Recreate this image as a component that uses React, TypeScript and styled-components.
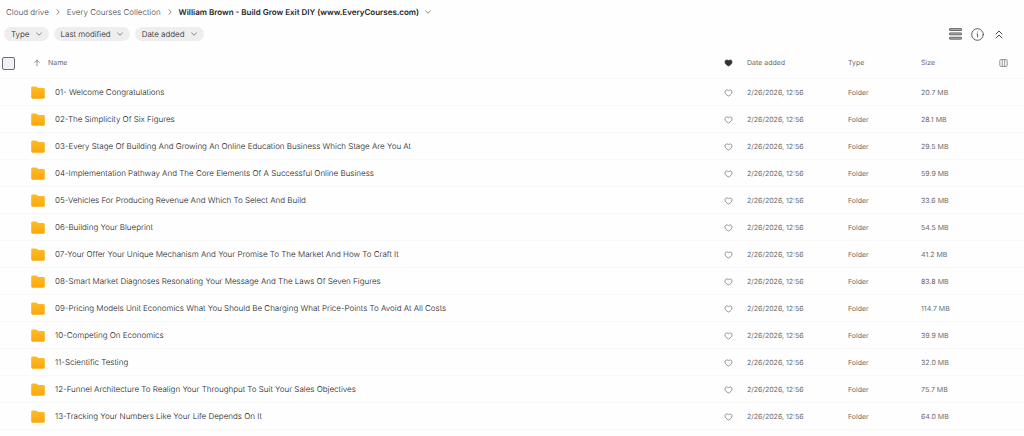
import React from "react";
import styled, { createGlobalStyle } from "styled-components";

const GlobalStyle = createGlobalStyle`
  * { box-sizing: border-box; }
  body {
    margin: 0;
    background: #fefefe;
    color: #161618;
    font-family: Inter, "Liberation Sans", sans-serif;
    font-size: 8px;
    font-weight: 300;
    line-height: 12px;
    text-rendering: geometricPrecision;
  }
  button { font: inherit; color: inherit; background: none; border: 0; padding: 0; cursor: pointer; text-rendering: inherit; }
  svg { display: block; flex: none; }
`;

const Page = styled.main`
  padding-bottom: 6px;
`;

const Breadcrumb = styled.nav`
  display: flex;
  align-items: center;
  gap: 6px;
  height: 24px;
  padding-left: 6px;
`;

const CrumbLink = styled.a`
  color: #444446;
  text-decoration: none;
`;

const CurrentCrumb = styled.button`
  display: flex;
  align-items: center;
  gap: 6px;
  color: #242627;
  font-weight: 600;
`;

const Toolbar = styled.div`
  display: flex;
  align-items: center;
  justify-content: space-between;
  height: 20px;
  padding: 0 19px 0 4px;
`;

const Filters = styled.div`
  display: flex;
  gap: 5px;
`;

const Chip = styled.button`
  display: flex;
  align-items: center;
  gap: 6px;
  height: 14px;
  padding: 0 7px;
  border-radius: 7px;
  background: #eeeeee;
`;

const Actions = styled.div`
  display: flex;
  align-items: center;
  gap: 9px;
`;

const IconButton = styled.button`
  display: flex;
  align-items: center;
  justify-content: center;
`;

const Table = styled.table`
  width: 100%;
  table-layout: fixed;
  border-collapse: separate;
  border-spacing: 0;
  margin-top: 3px;
`;

const Col = styled.col<{ $width?: number }>`
  width: ${(p) => (p.$width ? `${p.$width}px` : "auto")};
`;

const HeadCell = styled.th`
  height: 32px;
  padding: 1px 0 0;
  border-bottom: 1px solid #f8f8f8;
  color: #6a6a6c;
  font-size: 7px;
  font-weight: 400;
  text-align: left;
  vertical-align: middle;
`;

const SortButton = styled.button`
  display: flex;
  align-items: center;
  gap: 7px;
  padding-left: 4px;
`;

const Cell = styled.td`
  height: 27px;
  padding: 1px 0 0;
  border-bottom: 1px solid #f8f8f8;
  color: #6a6a6c;
  font-size: 7px;
  font-weight: 400;
  white-space: nowrap;
`;

const NameCell = styled(Cell)`
  padding: 0;
  color: #161618;
  font-size: 8px;
  font-weight: 300;
`;

const Checkbox = styled.input`
  appearance: none;
  display: block;
  width: 13px;
  height: 13px;
  margin: 0 0 0 2px;
  border: 1px solid #6b6b75;
  border-radius: 2px;
  background: #f0f0f6;
  &:checked { background: #6b6b75; }
`;

const FileName = styled.div`
  display: flex;
  align-items: center;
  gap: 10px;
  padding-left: 2px;
`;

type Chevron = { dir?: "down" | "right" };
const ChevronIcon = ({ dir = "down" }: Chevron) => (
  <svg width="6" height="6" viewBox="0 0 6 6" fill="none" stroke="#6a6a6c" strokeWidth="0.8" strokeLinecap="round" strokeLinejoin="round" aria-hidden="true">
    <path d={dir === "down" ? "M0.7 2 3 4.2 5.3 2" : "M2 0.7 4.2 3 2 5.3"} />
  </svg>
);

const FolderIcon = () => (
  <svg width="14" height="13" viewBox="0 0 14 13" aria-hidden="true">
    <defs>
      <linearGradient id="folder" x1="0" y1="0" x2="0" y2="1">
        <stop offset="0" stopColor="#fdbd28" />
        <stop offset="1" stopColor="#fba70c" />
      </linearGradient>
    </defs>
    <path d="M0.2 1.9C0.2 1 0.8 0.5 1.6 0.5H5c.6 0 1 .2 1.3.6l.5.6c.2.3.5.4.9.4h4.7c.8 0 1.4.6 1.4 1.4v7.8c0 .8-.6 1.4-1.4 1.4H1.6c-.8 0-1.4-.6-1.4-1.4z" fill="url(#folder)" />
  </svg>
);

const HeartIcon = ({ filled = false }: { filled?: boolean }) => (
  <svg width="9" height="8" viewBox="0 0 9 8" fill={filled ? "#303233" : "none"} stroke={filled ? "#303233" : "#6a6a6c"} strokeWidth="0.7" strokeLinejoin="round" aria-hidden="true">
    <path d="M4.5 7C2.5 6 1 4.8 1 3 1 1.8 1.8 1 2.8 1 3.5 1 4.1 1.2 4.5 1.6 4.9 1.2 5.5 1 6.2 1c1 0 1.8.8 1.8 2C8 4.8 6.5 6 4.5 7z" />
  </svg>
);

const ListIcon = () => (
  <svg width="13" height="12" viewBox="0 0 13 12" fill="#b5b5b7" stroke="#4c4c4e" strokeWidth="0.8" aria-hidden="true">
    <rect x="0.5" y="0.6" width="12" height="1.9" rx="0.4" />
    <rect x="0.5" y="4.9" width="12" height="1.9" rx="0.4" />
    <rect x="0.5" y="9.3" width="12" height="1.9" rx="0.4" />
  </svg>
);

const InfoIcon = () => (
  <svg width="13" height="13" viewBox="0 0 13 13" fill="none" stroke="#4c4c4e" strokeWidth="0.9" strokeLinecap="round" aria-hidden="true">
    <circle cx="6.5" cy="6.5" r="5.8" />
    <path d="M6 6h.6v3" />
    <circle cx="6.4" cy="4" r="0.5" fill="#4c4c4e" stroke="none" />
  </svg>
);

const CollapseIcon = () => (
  <svg width="12" height="9" viewBox="0 0 12 9" fill="none" stroke="#4c4c4e" strokeWidth="1" strokeLinecap="round" strokeLinejoin="round" aria-hidden="true">
    <path d="M3 4 6 1l3 3M3 8 6 5l3 3" />
  </svg>
);

const ArrowUpIcon = () => (
  <svg width="8" height="8" viewBox="0 0 8 8" fill="none" stroke="#6a6a6c" strokeWidth="0.7" strokeLinecap="round" strokeLinejoin="round" aria-hidden="true">
    <path d="M4 6.9V1.2M1.6 3.5 4 1.2l2.4 2.3" />
  </svg>
);

const ColumnsIcon = () => (
  <svg width="9" height="8" viewBox="0 0 9 8" fill="none" stroke="#6a6a6c" strokeWidth="0.7" aria-hidden="true">
    <rect x="0.8" y="0.6" width="7.4" height="6.8" rx="1" />
    <path d="M3.3 0.6v6.8M5.7 0.6v6.8" />
  </svg>
);

const files: [string, string][] = [
  ["01- Welcome Congratulations", "20.7 MB"],
  ["02-The Simplicity Of Six Figures", "28.1 MB"],
  ["03-Every Stage Of Building And Growing An Online Education Business Which Stage Are You At", "29.5 MB"],
  ["04-Implementation Pathway And The Core Elements Of A Successful Online Business", "59.9 MB"],
  ["05-Vehicles For Producing Revenue And Which To Select And Build", "33.6 MB"],
  ["06-Building Your Blueprint", "54.5 MB"],
  ["07-Your Offer Your Unique Mechanism And Your Promise To The Market And How To Craft It", "41.2 MB"],
  ["08-Smart Market Diagnoses Resonating Your Message And The Laws Of Seven Figures", "83.8 MB"],
  ["09-Pricing Models Unit Economics What You Should Be Charging What Price-Points To Avoid At All Costs", "114.7 MB"],
  ["10-Competing On Economics", "39.9 MB"],
  ["11-Scientific Testing", "32.0 MB"],
  ["12-Funnel Architecture To Realign Your Throughput To Suit Your Sales Objectives", "75.7 MB"],
  ["13-Tracking Your Numbers Like Your Life Depends On It", "64.0 MB"],
];

export default function App() {
  return (
    <Page>
      <GlobalStyle />
      <Breadcrumb aria-label="Breadcrumb">
        <CrumbLink href="#drive">Cloud drive</CrumbLink>
        <ChevronIcon dir="right" />
        <CrumbLink href="#collection">Every Courses Collection</CrumbLink>
        <ChevronIcon dir="right" />
        <CurrentCrumb>
          William Brown - Build Grow Exit DIY (www.EveryCourses.com)
          <ChevronIcon />
        </CurrentCrumb>
      </Breadcrumb>
      <Toolbar>
        <Filters>
          {["Type", "Last modified", "Date added"].map((label) => (
            <Chip key={label}>
              {label}
              <ChevronIcon />
            </Chip>
          ))}
        </Filters>
        <Actions>
          <IconButton aria-label="List view"><ListIcon /></IconButton>
          <IconButton aria-label="Info"><InfoIcon /></IconButton>
          <IconButton aria-label="Collapse"><CollapseIcon /></IconButton>
        </Actions>
      </Toolbar>
      <Table>
        <colgroup>
          <Col $width={29} />
          <Col />
          <Col $width={23} />
          <Col $width={101} />
          <Col $width={73} />
          <Col $width={78} />
          <Col $width={25} />
        </colgroup>
        <thead>
          <tr>
            <HeadCell><Checkbox type="checkbox" aria-label="Select all" /></HeadCell>
            <HeadCell><SortButton><ArrowUpIcon />Name</SortButton></HeadCell>
            <HeadCell><IconButton aria-label="Favourites"><HeartIcon filled /></IconButton></HeadCell>
            <HeadCell>Date added</HeadCell>
            <HeadCell>Type</HeadCell>
            <HeadCell>Size</HeadCell>
            <HeadCell><IconButton aria-label="Columns"><ColumnsIcon /></IconButton></HeadCell>
          </tr>
        </thead>
        <tbody>
          {files.map(([name, size]) => (
            <tr key={name}>
              <Cell />
              <NameCell><FileName><FolderIcon />{name}</FileName></NameCell>
              <Cell><IconButton aria-label="Add to favourites"><HeartIcon /></IconButton></Cell>
              <Cell>2/26/2026, 12:56</Cell>
              <Cell>Folder</Cell>
              <Cell>{size}</Cell>
              <Cell />
            </tr>
          ))}
        </tbody>
      </Table>
    </Page>
  );
}
